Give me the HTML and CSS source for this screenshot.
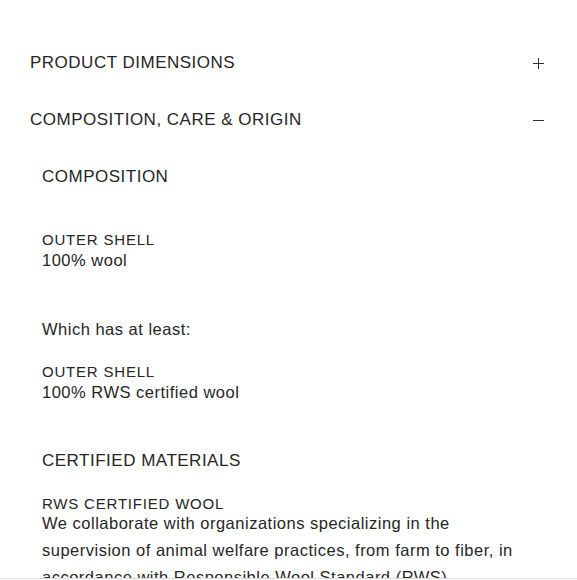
FILE: index.html
```html
<!DOCTYPE html>
<html lang="en">
<head>
<meta charset="utf-8">
<link rel="stylesheet" href="styles.css">
</head>
<body>
<div class="accordion">
  <div class="acc-item">
    <div class="acc-head">
      <span class="acc-title">PRODUCT DIMENSIONS</span>
      <svg class="acc-icon" width="11" height="11" viewBox="0 0 11 11"><path d="M5.5 0V11M0 5.5H11" stroke="#333" stroke-width="1" fill="none"/></svg>
    </div>
  </div>
  <div class="acc-item">
    <div class="acc-head">
      <span class="acc-title">COMPOSITION, CARE &amp; ORIGIN</span>
      <svg class="acc-icon" width="11" height="11" viewBox="0 0 11 11"><path d="M0 5.5H11" stroke="#333" stroke-width="1" fill="none"/></svg>
    </div>
    <div class="acc-body">
      <h3 class="sub-title">COMPOSITION</h3>
      <div class="group g1">
        <div class="label">OUTER SHELL</div>
        <div class="value">100% wool</div>
      </div>
      <p class="note">Which has at least:</p>
      <div class="group g2">
        <div class="label">OUTER SHELL</div>
        <div class="value">100% RWS certified wool</div>
      </div>
      <h3 class="sub-title t2">CERTIFIED MATERIALS</h3>
      <div class="group g3">
        <div class="label">RWS CERTIFIED WOOL</div>
        <p class="para">We collaborate with organizations specializing in the supervision of animal welfare practices, from farm to fiber, in accordance with Responsible Wool Standard (RWS).</p>
      </div>
    </div>
  </div>
</div>
<div class="bottom-bar"></div>
</body>
</html>
```
FILE: styles.css
```css
html, body {
  margin: 0;
  padding: 0;
  background: #fff;
}
body {
  font-family: "Liberation Sans", Arial, sans-serif;
  color: #262626;
}
.accordion {
  padding: 35px 30px 0 30px;
}
.acc-head {
  display: flex;
  align-items: center;
  justify-content: space-between;
  padding: 16px 3px 17px 0;
}
.acc-title {
  font-size: 17px;
  line-height: 24px;
  letter-spacing: 0.5px;
}
.acc-icon {
  display: block;
}
.acc-body {
  padding-left: 12px;
}
.sub-title {
  margin: 16px 0 0 0;
  font-weight: normal;
  font-size: 17px;
  line-height: 24px;
  letter-spacing: 0.5px;
}
.sub-title.t2 {
  margin-top: 47px;
}
.group.g1 { margin-top: 41px; }
.group.g2 { margin-top: 23px; }
.group.g3 { margin-top: 21px; }
.label {
  font-size: 15px;
  line-height: 20px;
  letter-spacing: 0.8px;
}
.value {
  font-size: 16.5px;
  line-height: 20px;
  letter-spacing: 0.5px;
}
.note {
  margin: 49px 0 0 0;
  font-size: 16.5px;
  line-height: 20px;
  letter-spacing: 0.5px;
}
.para {
  margin: -4px 0 0 0;
  font-size: 16.5px;
  line-height: 27px;
  letter-spacing: 0.5px;
  max-width: 480px;
}
.bottom-bar {
  position: fixed;
  left: 0;
  right: 0;
  bottom: 0;
  height: 1px;
  border-top: 1px solid #dcdcdc;
  background: #fff;
}
```
